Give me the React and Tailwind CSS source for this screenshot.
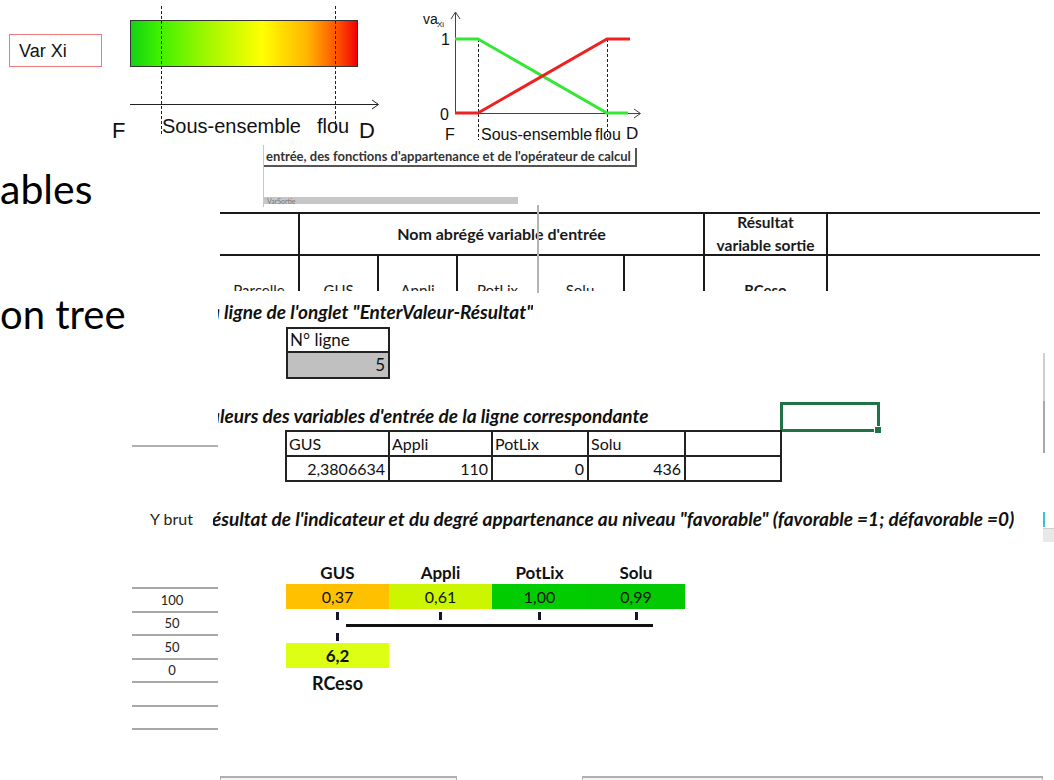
const LATO = "font-['Lato',sans-serif]";

function Diagrams() {
  const arial = "Liberation Sans, Arial, sans-serif";
  return (
    <svg className="absolute left-0 top-0" width="660" height="146" viewBox="0 0 660 146">
      <defs>
        <linearGradient id="bar" x1="0" x2="1" y1="0" y2="0">
          <stop offset="0" stopColor="#14d214" />
          <stop offset="0.12" stopColor="#3cf000" />
          <stop offset="0.35" stopColor="#a6f800" />
          <stop offset="0.58" stopColor="#ffff00" />
          <stop offset="0.78" stopColor="#ffb400" />
          <stop offset="0.92" stopColor="#ff4a00" />
          <stop offset="1" stopColor="#f00000" />
        </linearGradient>
      </defs>
      {/* diagram 1 */}
      <rect x="130.5" y="20.5" width="227" height="46" fill="url(#bar)" stroke="#333" />
      <line x1="161.5" y1="6" x2="161.5" y2="134" stroke="#222" strokeDasharray="3 2" />
      <line x1="335.5" y1="6" x2="335.5" y2="132" stroke="#222" strokeDasharray="3 2" />
      <line x1="130" y1="104.5" x2="378" y2="104.5" stroke="#222" />
      <polyline points="372,100 378.5,104.5 372,109" fill="none" stroke="#222" />
      <text x="112" y="138" fontSize="22" fontFamily={arial} fill="#111">F</text>
      <text x="162" y="133" fontSize="20" fontFamily={arial} fill="#111">Sous-ensemble</text>
      <text x="317" y="133" fontSize="20" fontFamily={arial} fill="#111">flou</text>
      <text x="359" y="138" fontSize="22" fontFamily={arial} fill="#111">D</text>

      {/* diagram 2 */}
      <line x1="455.5" y1="113" x2="455.5" y2="13" stroke="#444" />
      <polyline points="451,19 455.5,12 460,19" fill="none" stroke="#444" />
      <line x1="455" y1="113.5" x2="640" y2="113.5" stroke="#444" />
      <polyline points="634,109 640.5,113.5 634,118" fill="none" stroke="#444" />
      <line x1="478.5" y1="39" x2="478.5" y2="140" stroke="#222" strokeDasharray="3 2" />
      <line x1="607.5" y1="39" x2="607.5" y2="140" stroke="#222" strokeDasharray="3 2" />
      <polyline points="455,39 478,39 607,113 628,113" stroke="#33e833" strokeWidth="3" fill="none" />
      <polyline points="455,113 478,113 607,39 630,39" stroke="#ee2020" strokeWidth="3" fill="none" />
      <text x="423" y="24" fontSize="14" fontFamily={arial} fill="#111">va</text>
      <text x="437" y="27" fontSize="8" fontFamily={arial} fill="#111">Xi</text>
      <text x="441" y="45" fontSize="16" fontFamily={arial} fill="#111">1</text>
      <text x="440" y="120" fontSize="16" fontFamily={arial} fill="#111">0</text>
      <text x="445" y="140" fontSize="16" fontFamily={arial} fill="#111">F</text>
      <text x="481" y="140" fontSize="16" fontFamily={arial} fill="#111">Sous-ensemble</text>
      <text x="595" y="140" fontSize="16" fontFamily={arial} fill="#111">flou</text>
      <text x="626" y="139" fontSize="17" fontFamily={arial} fill="#111">D</text>
    </svg>
  );
}

function VarXi() {
  return (
    <div className="absolute left-[9px] top-[34px] w-[93px] h-[33px] border border-[#f07a7a] flex items-center pl-[9px] font-['Liberation_Sans',Arial,sans-serif] text-[18px] leading-[20px] text-[#111]">
      Var Xi
    </div>
  );
}

function SlideText() {
  return (
    <>
      <div className={`absolute left-0 top-[165px] ${LATO} text-[41px] leading-[48px] text-black whitespace-nowrap`}>ables</div>
      <div className={`absolute left-0 top-[290px] ${LATO} text-[40px] leading-[48px] text-black whitespace-nowrap`}>on tree</div>
    </>
  );
}

function TopSnippet() {
  return (
    <div className={`absolute left-[263px] top-[145px] w-[380px] h-[62px] border-l border-[#c8c8c8] ${LATO}`}>
      <div className="mt-[3px] w-[373px] h-[19px] border-r-2 border-b-2 border-[#555] pl-[2px] text-[13px] leading-[16px] font-bold text-[#333] whitespace-nowrap overflow-hidden">
        entrée, des fonctions d'appartenance et de l'opérateur de calcul
      </div>
      <div className="mt-[30px] w-[254px] h-[7px] bg-[#c6c6c6] overflow-hidden text-[7px] leading-[8px] text-[#777] pl-[3px]">
        VarSortie
      </div>
    </div>
  );
}

function HeaderTable() {
  const b = "border-[#1a1a1a]";
  const cell = "border-r-2 border-[#1a1a1a] pt-[25px] text-center whitespace-nowrap";
  return (
    <>
      <div className={`absolute left-[220px] top-[212px] w-[820px] h-[79px] overflow-hidden ${LATO} text-[#1a1a1a]`}>
        <div className={`flex h-[44px] border-t-2 border-b-2 ${b}`}>
          <div className={`w-[80px] border-r-2 ${b}`} />
          <div className={`w-[405px] border-r-2 ${b} flex items-center justify-center text-[16px] font-bold`}>
            Nom abrégé variable d'entrée
          </div>
          <div className={`w-[123px] border-r-2 ${b} flex flex-col items-center justify-center text-[15.5px] leading-[23px] font-bold`}>
            <span>Résultat</span>
            <span>variable sortie</span>
          </div>
          <div className="flex-1" />
        </div>
        <div className="flex h-[40px] text-[15px] leading-[18px]">
          <div className={`w-[80px] ${cell}`}>Parcelle</div>
          <div className={`w-[79px] ${cell}`}>GUS</div>
          <div className={`w-[79px] ${cell}`}>Appli</div>
          <div className="w-[79px] pt-[25px] text-center">PotLix</div>
          <div className={`w-[88px] ${cell}`}>Solu</div>
          <div className={`w-[80px] ${cell}`}></div>
          <div className={`w-[123px] ${cell} font-bold`}>RCeso</div>
          <div className="flex-1" />
        </div>
      </div>
      <div className="absolute left-[537px] top-[205px] w-[2px] h-[88px] bg-[#b4b4b4]" />
    </>
  );
}

function Sheet() {
  const vars = [
    { h: "GUS", v: "2,3806634", w: "w-[103px]" },
    { h: "Appli", v: "110", w: "w-[103px]" },
    { h: "PotLix", v: "0", w: "w-[96px]" },
    { h: "Solu", v: "436", w: "w-[97px]" },
    { h: "", v: "", w: "w-[96px]" },
  ];
  const cols = [
    { name: "GUS", val: "0,37", w: "w-[103px]", bg: "bg-[#ffc000]" },
    { name: "Appli", val: "0,61", w: "w-[103px]", bg: "bg-[#ccf500]" },
    { name: "PotLix", val: "1,00", w: "w-[95px]", bg: "bg-[#00cc00]" },
    { name: "Solu", val: "0,99", w: "w-[98px]", bg: "bg-[#03c903]" },
  ];
  const list = ["100", "50", "50", "0", "", ""];
  return (
    <div className={`${LATO} text-[#111]`}>
      {/* title 1 */}
      <div className="absolute left-[218px] top-[301px] overflow-hidden whitespace-nowrap text-[19px] leading-[22px] font-bold italic">
        <span className="ml-[-8px]">a ligne de l'onglet "EnterValeur-Résultat"</span>
      </div>

      {/* N° ligne */}
      <div className="absolute left-[286px] top-[327px] w-[104px] border-2 border-[#222] text-[17px] leading-[20px]">
        <div className="h-[24px] border-b-2 border-[#222] pl-[2px] pt-[1px]">N° ligne</div>
        <div className="h-[24px] bg-[#c0c0c0] text-right pr-[3px] pt-[2px]">5</div>
      </div>

      {/* title 2 */}
      <div className="absolute left-[218px] top-[405px] overflow-hidden whitespace-nowrap text-[19px] leading-[22px] font-bold italic">
        <span className="ml-[-8px]">aleurs des variables d'entrée de la ligne correspondante</span>
      </div>

      {/* green selection */}
      <div className="absolute left-[780px] top-[402px] w-[100px] h-[30px] border-[3px] border-[#217346]" />
      <div className="absolute left-[874px] top-[426px] w-[8px] h-[8px] bg-[#217346] border border-white" />

      {/* variable table */}
      <div className="absolute left-[285px] top-[430px] border-l-2 border-t-2 border-[#222] text-[16px] leading-[20px]">
        <div className="flex">
          {vars.map((c, i) => (
            <div key={i} className={`${c.w} h-[25px] border-r-2 border-b-2 border-[#222] pl-[2px] pt-[2px]`}>{c.h}</div>
          ))}
        </div>
        <div className="flex">
          {vars.map((c, i) => (
            <div key={i} className={`${c.w} h-[25px] border-r-2 border-b-2 border-[#222] pr-[3px] pt-[2px] text-right`}>{c.v}</div>
          ))}
        </div>
      </div>

      {/* grey stub line */}
      <div className="absolute left-[132px] top-[445px] w-[86px] h-[2px] bg-[#b0b0b0]" />

      {/* right scroll line */}
      <div className="absolute left-[1043px] top-[353px] w-[3px] h-[100px] flex flex-col">
        <div className="flex-1 border-l-2 border-[#cfcfcf]" />
        <div className="h-[52px] border-l-2 border-[#a8a8a8]" />
      </div>

      {/* Y brut & title 3 */}
      <div className="absolute left-[150px] top-[509px] text-[16px] leading-[20px] text-[#222]">Y brut</div>
      <div className="absolute left-[213px] top-[508px] overflow-hidden whitespace-nowrap text-[19px] leading-[22px] font-bold italic">
        <span className="ml-[-1px]">ésultat de l'indicateur et du degré appartenance au niveau "favorable" (favorable =1; défavorable =0)</span>
      </div>
      <div className="absolute left-[1043px] top-[512px] w-[2px] h-[15px] bg-[#3cc4c4]" />
      <div className="absolute left-[1043px] top-[528px] w-[11px] h-[14px] bg-[#e8e8e8] border-t border-[#d0d0d0]" />

      {/* left list */}
      <div className="absolute left-[132px] top-[587px] w-[86px] flex flex-col text-[13px] leading-[13px] text-[#222]">
        {list.map((v, i) => (
          <div key={i} className="h-[23.5px] border-t-2 border-[#a8a8a8] flex items-end justify-center pr-[6px] pb-[4px]">{v}</div>
        ))}
        <div className="border-t-2 border-[#a8a8a8]" />
      </div>

      {/* fuzzy tree chart */}
      <div className="absolute left-[286px] top-[563px] flex flex-col">
        <div className="flex h-[21px]">
          {cols.map((c) => (
            <div key={c.name} className={`${c.w} text-center text-[17px] leading-[20px] font-bold`}>{c.name}</div>
          ))}
        </div>
        <div className="flex h-[25px]">
          {cols.map((c) => (
            <div key={c.name} className={`${c.w} ${c.bg} flex items-center justify-center text-[16px] leading-[20px]`}>{c.val}</div>
          ))}
        </div>
        <div className="flex h-[8px] mt-[3px]">
          {cols.map((c) => (
            <div key={c.name} className={`${c.w} flex justify-center`}>
              <div className="w-[3px] h-[8px] bg-[#14142a]" />
            </div>
          ))}
        </div>
        <div className="ml-[60px] w-[307px] h-[3px] mt-[4px] bg-[#111]" />
        <div className="w-[103px] flex justify-center mt-[6px]">
          <div className="w-[3px] h-[8px] bg-[#14142a]" />
        </div>
        <div className="w-[103px] h-[25px] mt-[2px] bg-[#dcff14] flex items-center justify-center text-[17px] leading-[20px] font-bold">6,2</div>
        <div className="w-[103px] mt-[5px] text-center text-[18px] leading-[20px] font-bold">RCeso</div>
      </div>

      {/* bottom boxes */}
      <div className="absolute left-[220px] top-[776px] w-[237px] h-[6px] border-t-2 border-x border-[#b0b0b0] bg-[#f3f3f3]" />
      <div className="absolute left-[582px] top-[776px] w-[461px] h-[6px] border-t-2 border-x border-[#b0b0b0] bg-[#f3f3f3]" />
    </div>
  );
}

export default function App() {
  return (
    <div className="relative w-[1054px] h-[780px] overflow-hidden bg-white text-black">
      <Diagrams />
      <VarXi />
      <SlideText />
      <TopSnippet />
      <HeaderTable />
      <Sheet />
    </div>
  );
}
